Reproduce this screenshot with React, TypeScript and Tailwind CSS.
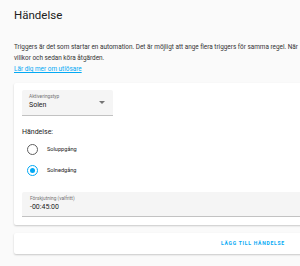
import React, { useState } from "react";

const font = { fontFamily: "Roboto, 'Noto Sans', sans-serif" };

const Radio = ({ checked, label, onClick }: { checked: boolean; label: string; onClick: () => void }) => (
  <button onClick={onClick} className="flex items-center h-[21px] pl-[5px] text-left">
    <span
      className={`w-[11px] h-[11px] rounded-full border-[1.5px] flex items-center justify-center ${
        checked ? "border-[#03a9f4]" : "border-[#5f5f5f]"
      }`}
    >
      {checked && <span className="w-[5px] h-[5px] rounded-full bg-[#03a9f4]" />}
    </span>
    <span className="ml-[9px] text-[5.6px] text-[#212121]">{label}</span>
  </button>
);

export default function App() {
  const [event, setEvent] = useState("sunset");

  return (
    <div className="w-[300px] h-[266px] overflow-hidden bg-[#fafafa]" style={font}>
      <div className="w-[320px] pl-[14px]">
        <h1 className="pt-[7px] text-[11.5px] leading-[16px] text-[#212121]">Händelse</h1>

        <p className="mt-[19px] text-[6.4px] leading-[11px] text-[#333] whitespace-nowrap">
          Triggers är det som startar en automation. Det är möjligt att ange flera triggers för samma regel. När
          <br />
          villkor och sedan köra åtgärden.
          <br />
          <a href="#" className="text-[#03a9f4] underline">Lär dig mer om utlösare</a>
        </p>

        <div className="mt-[8px] bg-white rounded-[2px] shadow-[0_1px_2px_rgba(0,0,0,0.2)] pt-[7px] pb-[8px] px-[8px]">
          <div className="w-[91px] h-[26px] bg-[#f5f5f5] border-b border-[#c2c2c2] rounded-t-[2px] relative px-[7px] pt-[4px]">
            <div className="text-[4.8px] leading-[6px] text-[#737373]">Aktiveringstyp</div>
            <div className="text-[7px] leading-[10px] text-[#212121]">Solen</div>
            <span className="absolute right-[8px] top-[11px] w-0 h-0 border-l-[3px] border-r-[3px] border-t-[3px] border-l-transparent border-r-transparent border-t-[#757575]" />
          </div>

          <div className="mt-[11px] text-[7px] leading-[10px] text-[#212121]">Händelse:</div>
          <div className="mt-[2px] flex flex-col">
            <Radio checked={event === "sunrise"} label="Soluppgång" onClick={() => setEvent("sunrise")} />
            <Radio checked={event === "sunset"} label="Solnedgång" onClick={() => setEvent("sunset")} />
          </div>

          <div className="mt-[11px] h-[25px] bg-[#f5f5f5] border-b border-[#c2c2c2] rounded-t-[2px] px-[8px] pt-[4px]">
            <div className="text-[4.8px] leading-[6px] text-[#737373]">Förskjutning (valfritt)</div>
            <div className="text-[7px] leading-[10px] text-[#212121]">-00:45:00</div>
          </div>
        </div>

        <div className="mt-[8px] bg-white rounded-[2px] shadow-[0_1px_2px_rgba(0,0,0,0.2)] h-[21px] flex items-center">
          <button className="ml-[207px] text-[5px] font-bold tracking-[0.75px] text-[#03a9f4]">
            LÄGG TILL HÄNDELSE
          </button>
        </div>
      </div>
    </div>
  );
}
